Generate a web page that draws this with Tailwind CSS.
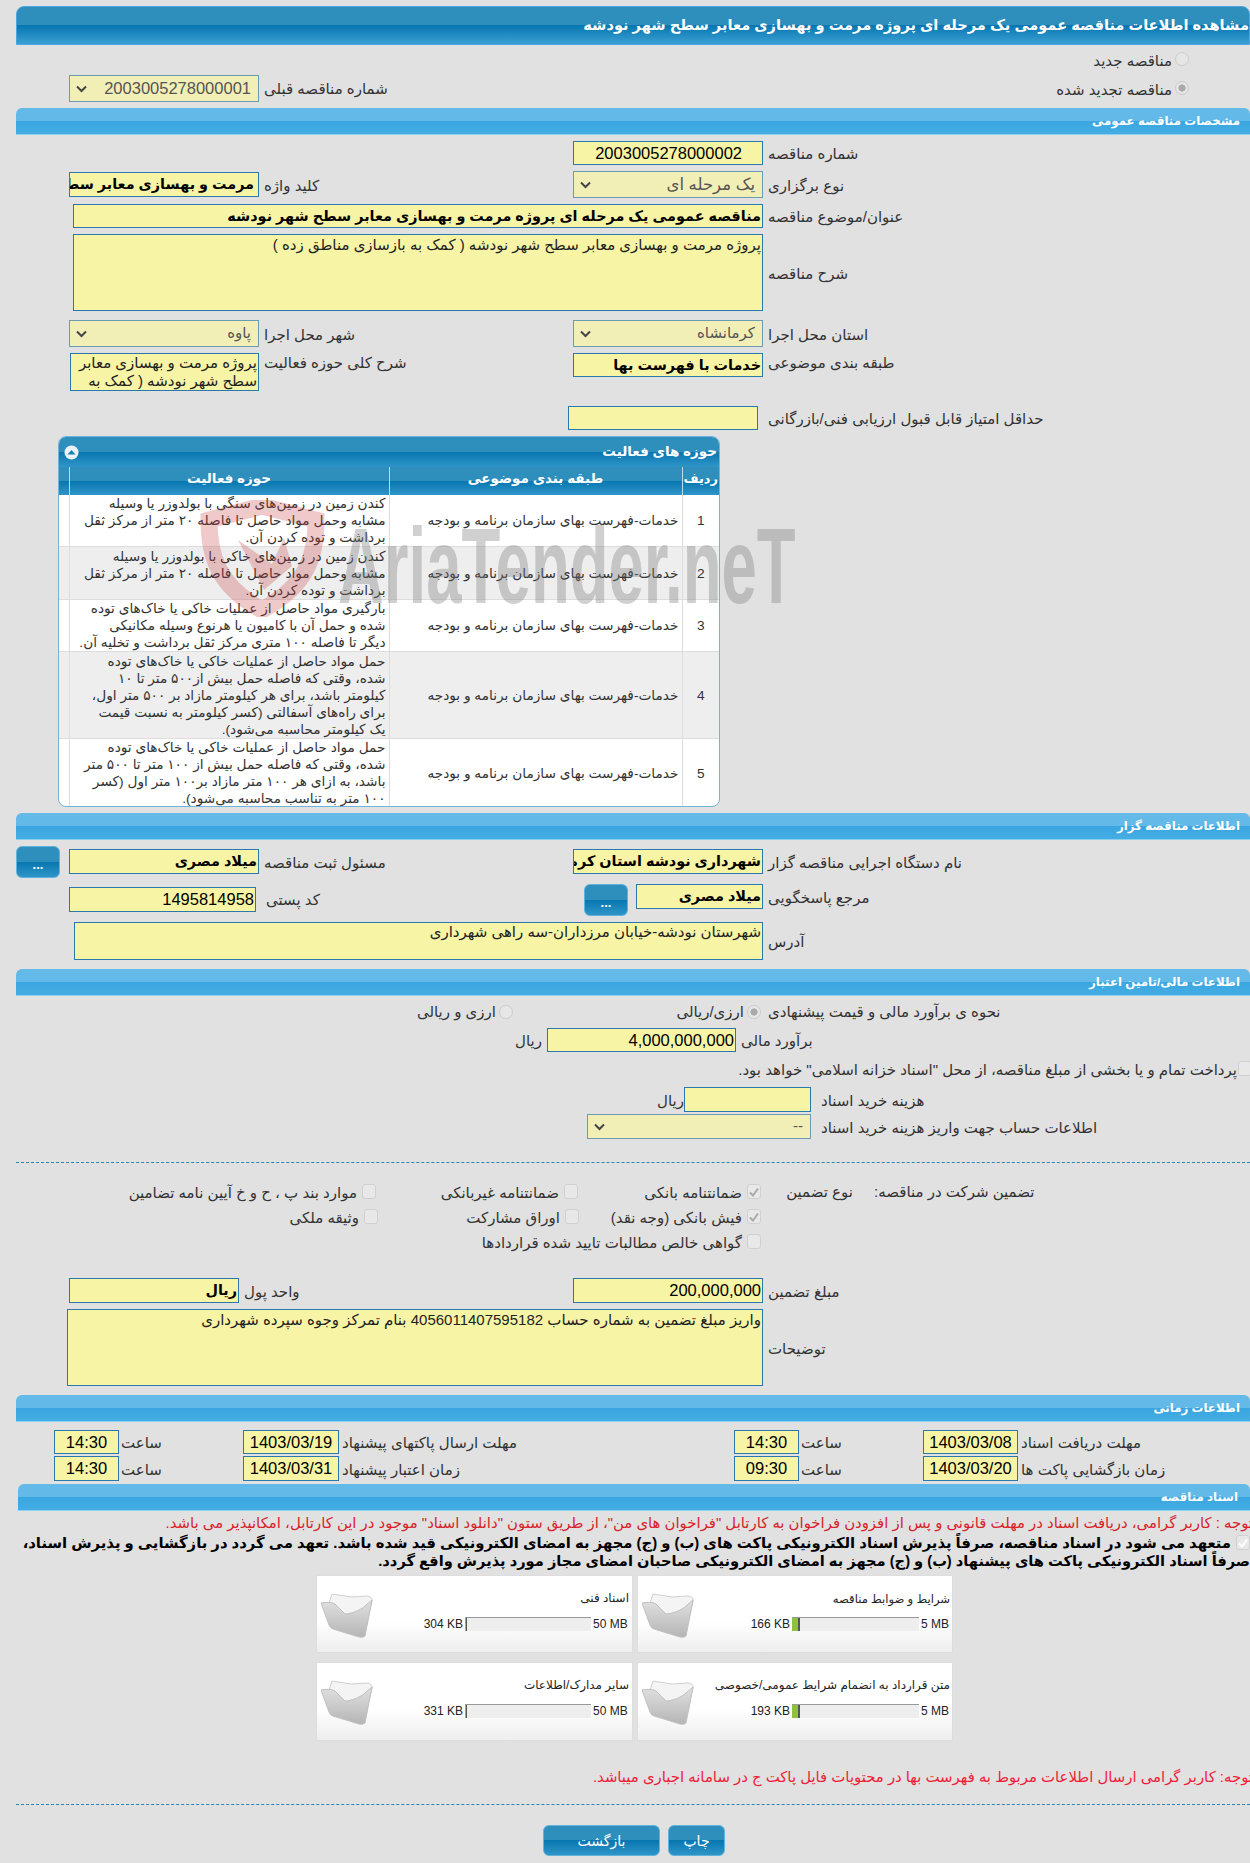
<!DOCTYPE html>
<html lang="fa" dir="rtl">
<head>
<meta charset="UTF-8">
<title>مشاهده اطلاعات مناقصه</title>
<script src="https://cdn.jsdelivr.net/npm/@tailwindcss/browser@4"></script>
</head>
<body class="bg-[#e1e1e1] font-['Liberation_Sans','DejaVu_Sans',sans-serif] text-[15px] text-[#333] overflow-hidden">
<div class="relative w-[1250px] h-[1863px] pl-4 overflow-hidden">

  <!-- title bar -->
  <div class="mt-[6px] pt-[6px] h-[39px] rounded-t-[8px] border border-[#4aa5e0] bg-[linear-gradient(#2e8fbd_50%,#0876b0_50%,#3aa0d3)] text-white font-bold text-[14.6px] leading-[24px] whitespace-nowrap overflow-hidden">مشاهده اطلاعات مناقصه عمومی یک مرحله ای پروژه مرمت و بهسازی معابر سطح شهر نودشه</div>

  <div class="flex items-center gap-[3px] pr-[61px] mt-[7px] h-[14px]"><span class="w-[14px] h-[14px] rounded-full border border-[#ccc] bg-[#e6e6e6]"></span><span class="mt-[4px]">مناقصه جدید</span></div>
  <div class="flex justify-between items-center mt-[9px] h-[27px] pr-[61px] pl-[53px]">
    <div class="flex items-center gap-[3px]"><span class="w-[14px] h-[14px] -mt-[2px] rounded-full border border-[#ccc] bg-[radial-gradient(circle,#aaa_40%,#e6e6e6_45%)]"></span><span class="mt-[3px]">مناقصه تجدید شده</span></div>
    <div class="flex items-center gap-[5px]"><span class="mt-[2px]">شماره مناقصه قبلی</span>
      <div class="w-[190px] h-[27px] flex justify-between items-center border border-[#6a9bb5] bg-[#f2efb6] pr-[7px] pl-[6px] text-[#555] text-[16.5px]"><span>2003005278000001</span><svg class="w-[11px] h-[8px]" viewBox="0 0 11 8"><path d="M1 1.5 5.5 6 10 1.5" fill="none" stroke="#444" stroke-width="2"/></svg></div>
    </div>
  </div>

  <!-- مشخصات -->
  <div class="mt-[6px] h-[27px] pr-[10px] rounded-t-[6px] border-b border-[#8cd0f0] bg-[linear-gradient(#63b9e8_50%,#3aa5e0_50%,#44ade3)] text-white font-bold text-[11.8px] leading-[27px]">مشخصات مناقصه عمومی</div>

  <div class="flex gap-[5px] mt-[6px] h-[24px]">
    <div class="w-[482px] text-left leading-[26px]">شماره مناقصه</div>
    <div class="w-[190px] border border-[#2a79ae] bg-[#f7f5a5] text-black text-[16.5px] leading-[22px] pr-[20px]">2003005278000002</div>
  </div>
  <div class="flex gap-[5px] mt-[6px] h-[27px]">
    <div class="w-[482px] text-left leading-[29px]">نوع برگزاری</div>
    <div class="w-[190px] flex justify-between items-center border border-[#6a9bb5] bg-[#f2efb6] pr-[7px] pl-[6px] text-[#555] text-[16.5px]"><span>یک مرحله ای</span><svg class="w-[11px] h-[8px]" viewBox="0 0 11 8"><path d="M1 1.5 5.5 6 10 1.5" fill="none" stroke="#444" stroke-width="2"/></svg></div>
    <div class="w-[304px] text-left leading-[29px]">کلید واژه</div>
    <div class="w-[190px] h-[25px] mt-[1px] border border-[#2a79ae] bg-[#f7f5a5] text-black font-bold text-[14.4px] leading-[23px] pr-[4px] overflow-hidden whitespace-nowrap">مرمت و بهسازی معابر سطح شهر نودشه</div>
  </div>
  <div class="flex gap-[5px] mt-[6px] h-[24px]">
    <div class="w-[482px] text-left leading-[26px]">عنوان/موضوع مناقصه</div>
    <div class="w-[690px] border border-[#2a79ae] bg-[#f7f5a5] text-black font-bold text-[14.4px] leading-[22px] pr-[1px] overflow-hidden whitespace-nowrap">مناقصه عمومی یک مرحله ای پروژه مرمت و بهسازی معابر سطح شهر نودشه</div>
  </div>
  <div class="flex gap-[5px] mt-[6px] h-[77px]">
    <div class="w-[482px] text-left leading-[79px]">شرح مناقصه</div>
    <div class="w-[690px] border border-[#2a79ae] bg-[#f7f5a5] text-[#222] pr-[1px] pt-[1px] leading-[17px]">پروژه مرمت و بهسازی معابر سطح شهر نودشه ( کمک به بازسازی مناطق زده )</div>
  </div>
  <div class="flex gap-[5px] mt-[9px] h-[27px]">
    <div class="w-[482px] text-left leading-[29px]">استان محل اجرا</div>
    <div class="w-[190px] flex justify-between items-center border border-[#6a9bb5] bg-[#f2efb6] pr-[7px] pl-[6px] text-[#555] text-[15px]"><span>کرمانشاه</span><svg class="w-[11px] h-[8px]" viewBox="0 0 11 8"><path d="M1 1.5 5.5 6 10 1.5" fill="none" stroke="#444" stroke-width="2"/></svg></div>
    <div class="w-[304px] text-left leading-[29px]">شهر محل اجرا</div>
    <div class="w-[190px] flex justify-between items-center border border-[#6a9bb5] bg-[#f2efb6] pr-[7px] pl-[6px] text-[#555] text-[15px]"><span>پاوه</span><svg class="w-[11px] h-[8px]" viewBox="0 0 11 8"><path d="M1 1.5 5.5 6 10 1.5" fill="none" stroke="#444" stroke-width="2"/></svg></div>
  </div>
  <div class="flex gap-[5px] mt-[6px] h-[38px]">
    <div class="w-[482px] text-left leading-[20px]">طبقه بندی موضوعی</div>
    <div class="w-[190px] h-[24px] border border-[#2a79ae] bg-[#f7f5a5] text-black font-bold text-[14.4px] leading-[22px] pr-[1px] overflow-hidden whitespace-nowrap">خدمات با فهرست بها</div>
    <div class="w-[304px] text-left leading-[20px]">شرح کلی حوزه فعالیت</div>
    <div class="w-[189px] border border-[#2a79ae] bg-[#f7f5a5] text-[#222] pr-[1px] leading-[18px] overflow-hidden whitespace-nowrap">پروژه مرمت و بهسازی معابر<br>سطح شهر نودشه ( کمک به</div>
  </div>
  <div class="flex gap-[10px] mt-[15px] h-[24px]">
    <div class="w-[482px] text-left leading-[26px]">حداقل امتیاز قابل قبول ارزیابی فنی/بازرگانی</div>
    <div class="w-[190px] border border-[#2a79ae] bg-[#f7f5a5]"></div>
  </div>

  <!-- حوزه های فعالیت -->
  <div class="mt-[6px] mr-[530px] w-[662px] h-[371px] rounded-[8px] overflow-hidden border border-[#6fb4dc] bg-white">
    <div class="h-[30px] flex justify-between items-center pr-[2px] pl-[5px] bg-[linear-gradient(#2e8fbd_50%,#0876b0_50%,#2f95c8)] text-white font-bold text-[13.5px]">
      <span>حوزه های فعالیت</span>
      <svg class="w-[15px] h-[15px]" viewBox="0 0 15 15"><circle cx="7.5" cy="7.5" r="7" fill="#e8f2f8"/><path d="M3.5 9.5 7.5 5l4 4.500z" fill="#1b7fb4"/></svg>
    </div>
    <table class="w-full table-fixed border-collapse text-[13.7px] text-[#333] leading-[17px]">
      <colgroup><col class="w-[37px]"><col class="w-[293px]"><col class="w-[320px]"><col class="w-[12px]"></colgroup>
      <thead>
        <tr class="h-[28px] bg-[linear-gradient(#2e8fbd_50%,#0876b0_50%,#2f95c8)] text-white font-bold text-[13.5px]">
          <th class="border-l border-[#bcdcee] font-bold text-[13px] pb-[5px]">ردیف</th><th class="border-l border-[#bcdcee] font-bold pb-[5px]">طبقه بندی موضوعی</th><th class="border-l border-[#bcdcee] font-bold pb-[5px]">حوزه فعالیت</th><th></th>
        </tr>
      </thead>
      <tbody>
        <tr class="h-[51px] border-b border-[#ddd]">
          <td class="text-center border-l border-[#ddd]">1</td><td class="pr-[3px] border-l border-[#ddd] whitespace-nowrap">خدمات-فهرست بهای سازمان برنامه و بودجه</td>
          <td class="pr-[3px] border-l border-[#ddd] whitespace-nowrap">کندن زمین در زمین‌های سنگی با بولدوزر یا وسیله<br>مشابه وحمل مواد حاصل  تا فاصله ۲۰ متر از مرکز ثقل<br>برداشت و توده کردن  آن.</td><td></td>
        </tr>
        <tr class="h-[53px] border-b border-[#ddd] bg-[#eee]">
          <td class="text-center border-l border-[#ddd]">2</td><td class="pr-[3px] border-l border-[#ddd] whitespace-nowrap">خدمات-فهرست بهای سازمان برنامه و بودجه</td>
          <td class="pr-[3px] border-l border-[#ddd] whitespace-nowrap">کندن زمین در زمین‌های خاکی با بولدوزر یا وسیله<br>مشابه وحمل مواد حاصل تا فاصله ۲۰ متر از مرکز ثقل<br>برداشت و توده کردن آن.</td><td></td>
        </tr>
        <tr class="h-[51px] border-b border-[#ddd]">
          <td class="text-center border-l border-[#ddd]">3</td><td class="pr-[3px] border-l border-[#ddd] whitespace-nowrap">خدمات-فهرست بهای سازمان برنامه و بودجه</td>
          <td class="pr-[3px] border-l border-[#ddd] whitespace-nowrap">بارگیری مواد حاصل از عملیات خاکی یا خاک‌های توده<br>شده و  حمل آن با کامیون یا هرنوع وسیله مکانیکی<br>دیگر تا فاصله ۱۰۰ متری مرکز ثقل  برداشت و تخلیه آن.</td><td></td>
        </tr>
        <tr class="h-[87px] border-b border-[#ddd] bg-[#eee]">
          <td class="text-center border-l border-[#ddd]">4</td><td class="pr-[3px] border-l border-[#ddd] whitespace-nowrap">خدمات-فهرست بهای سازمان برنامه و بودجه</td>
          <td class="pr-[3px] border-l border-[#ddd] whitespace-nowrap">حمل مواد حاصل از عملیات خاکی یا خاک‌های توده<br>شده، وقتی  که فاصله حمل بیش از۵۰۰ متر تا ۱۰<br>کیلومتر باشد، برای هر کیلومتر مازاد بر ۵۰۰  متر اول،<br>برای راه‌های آسفالتی (کسر کیلومتر به نسبت قیمت<br>یک کیلومتر محاسبه می‌شود).</td><td></td>
        </tr>
        <tr class="h-[69px]">
          <td class="text-center border-l border-[#ddd]">5</td><td class="pr-[3px] border-l border-[#ddd] whitespace-nowrap">خدمات-فهرست بهای سازمان برنامه و بودجه</td>
          <td class="pr-[3px] border-l border-[#ddd] whitespace-nowrap">حمل مواد حاصل از عملیات خاکی یا خاک‌های توده<br>شده، وقتی که فاصله حمل بیش از ۱۰۰ متر تا ۵۰۰ متر<br>باشد، به ازای هر ۱۰۰ متر مازاد بر۱۰۰ متر اول (کسر<br>۱۰۰ متر به تناسب محاسبه می‌شود).</td><td></td>
        </tr>
      </tbody>
    </table>
  </div>

  <!-- watermark -->
  <div class="absolute left-[200px] top-[500px] w-[600px] h-[120px] pointer-events-none" dir="ltr">
    <svg class="absolute left-0 top-0 w-[125px] h-[117px]" viewBox="0 0 125 117"><path d="M9 20 62 6l54 14c0 32-6 64-54 90C18 86 9 56 9 20z" fill="none" stroke="#c83c3c" stroke-opacity=".27" stroke-width="17"/><path d="M38 40 72 64 84 38 92 66 64 90z" fill="#c83c3c" fill-opacity=".27"/></svg>
    <span class="absolute left-[138px] top-[16px] text-[#777]/35 font-bold text-[108px] leading-[100px] whitespace-nowrap origin-left scale-x-[0.588]">AriaTender.neT</span>
  </div>

  <!-- مناقصه گزار -->
  <div class="mt-[6px] h-[27px] pr-[10px] rounded-t-[6px] border-b border-[#8cd0f0] bg-[linear-gradient(#63b9e8_50%,#3aa5e0_50%,#44ade3)] text-white font-bold text-[11.8px] leading-[27px]">اطلاعات مناقصه گزار</div>
  <div class="flex gap-[5px] mt-[9px] h-[25px]">
    <div class="w-[482px] text-left leading-[27px]">نام دستگاه اجرایی مناقصه گزار</div>
    <div class="w-[190px] border border-[#2a79ae] bg-[#f7f5a5] text-black font-bold text-[14.4px] leading-[23px] pr-[1px] overflow-hidden whitespace-nowrap">شهرداری نودشه استان کرمانشاه</div>
    <div class="w-[304px] text-left leading-[27px]">مسئول ثبت مناقصه</div>
    <div class="w-[190px] border border-[#2a79ae] bg-[#f7f5a5] text-black font-bold text-[14.4px] leading-[23px] pr-[1px]">میلاد مصری</div>
    <div class="w-[44px] h-[32px] -mt-[3px] mr-auto rounded-[6px] border border-[#5fb3dc] bg-[linear-gradient(#2e8fbd_50%,#0876b0_50%,#2f95c8)] text-white font-bold text-[13px] text-center leading-[36px]">...</div>
  </div>
  <div class="flex mt-[10px] h-[32px]">
    <div class="w-[482px] text-left leading-[27px]">مرجع پاسخگویی</div>
    <div class="w-[127px] h-[25px] mr-[5px] border border-[#2a79ae] bg-[#f7f5a5] text-black font-bold text-[14.4px] leading-[23px] pr-[1px]">میلاد مصری</div>
    <div class="w-[44px] h-[32px] mr-[8px] rounded-[6px] border border-[#5fb3dc] bg-[linear-gradient(#2e8fbd_50%,#0876b0_50%,#2f95c8)] text-white font-bold text-[13px] text-center leading-[36px]">...</div>
    <div class="w-[328px] pl-[10px] text-left leading-[31px]">کد پستی</div>
    <div class="w-[187px] h-[25px] mt-[3px] border border-[#2a79ae] bg-[#f7f5a5] text-black text-[16.5px] leading-[23px] pr-[1px]">1495814958</div>
  </div>
  <div class="flex gap-[5px] mt-[6px] h-[38px]">
    <div class="w-[482px] text-left leading-[40px]">آدرس</div>
    <div class="w-[689px] border border-[#2a79ae] bg-[#f7f5a5] text-[#222] pr-[1px] leading-[17px]">شهرستان نودشه-خیابان مرزداران-سه راهی شهرداری</div>
  </div>

  <!-- مالی -->
  <div class="mt-[9px] h-[27px] pr-[10px] rounded-t-[6px] border-b border-[#8cd0f0] bg-[linear-gradient(#63b9e8_50%,#3aa5e0_50%,#44ade3)] text-white font-bold text-[11.8px] leading-[27px]">اطلاعات مالی/تامین اعتبار</div>
  <div class="flex items-center mt-[7px] h-[18px]">
    <div class="w-[482px] text-left">نحوه ی برآورد مالی و قیمت پیشنهادی</div>
    <div class="w-[255px] pr-[7px] flex items-center gap-[3px]"><span class="w-[14px] h-[14px] rounded-full border border-[#ccc] bg-[radial-gradient(circle,#aaa_40%,#e6e6e6_45%)]"></span><span>ارزی/ریالی</span></div>
    <div class="flex items-center gap-[3px]"><span class="w-[14px] h-[14px] rounded-full border border-[#ccc] bg-[#e6e6e6]"></span><span>ارزی و ریالی</span></div>
  </div>
  <div class="flex gap-[5px] mt-[7px] h-[24px]">
    <div class="w-[509px] text-left leading-[26px]">برآورد مالی</div>
    <div class="w-[189px] border border-[#2a79ae] bg-[#f7f5a5] text-black text-[16.5px] leading-[22px] pr-[1px]">4,000,000,000</div>
    <div class="leading-[26px]">ریال</div>
  </div>
  <div class="flex items-center gap-[1px] mt-[8px] h-[17px] -mr-[2px]">
    <span class="w-[14px] h-[15px] shrink-0 rounded-[3px] border border-[#d0d0d0] bg-[#e8e8e8]"></span>
    <span class="mt-[4px]">پرداخت تمام و یا بخشی از مبلغ مناقصه، از محل "اسناد خزانه اسلامی" خواهد بود.</span>
  </div>
  <div class="flex mt-[10px] h-[25px]">
    <div class="w-[429px] text-left leading-[27px]">هزینه خرید اسناد</div>
    <div class="w-[127px] mr-[10px] border border-[#2a79ae] bg-[#f7f5a5]"></div>
    <div class="leading-[27px]">ریال</div>
  </div>
  <div class="flex mt-[2px] h-[25px]">
    <div class="w-[429px] text-left leading-[27px]">اطلاعات حساب جهت واریز هزینه خرید اسناد</div>
    <div class="w-[224px] mr-[10px] flex justify-between items-center border border-[#6a9bb5] bg-[#f2efb6] pr-[7px] pl-[6px] text-[#555]"><span>--</span><svg class="w-[11px] h-[8px]" viewBox="0 0 11 8"><path d="M1 1.5 5.5 6 10 1.5" fill="none" stroke="#444" stroke-width="2"/></svg></div>
  </div>
  <div class="mt-[23px] border-t border-dashed border-[#2a87b5]"></div>

  <!-- تضمین -->
  <div class="flex items-center mt-[20px] h-[17px]">
    <div class="w-[376px] text-left mt-[2px]">تضمین شرکت در مناقصه:</div>
    <div class="w-[113px] pr-[21px] mt-[2px] whitespace-nowrap">نوع تضمین</div>
    <div class="w-[183px] flex items-center gap-[5px]"><span class="w-[14px] h-[15px] rounded-[3px] border border-[#d0d0d0] bg-[#e8e8e8] flex items-center justify-center"><svg class="w-[10px] h-[10px]" viewBox="0 0 10 10"><path d="M1 5.500 4 8.500 9 1.500" fill="none" stroke="#aaa" stroke-width="2"/></svg></span><span class="mt-[3px]">ضمانتنامه بانکی</span></div>
    <div class="w-[202px] flex items-center gap-[5px]"><span class="w-[14px] h-[15px] rounded-[3px] border border-[#d0d0d0] bg-[#e8e8e8]"></span><span class="mt-[3px]">ضمانتنامه غیربانکی</span></div>
    <div class="flex items-center gap-[5px]"><span class="w-[14px] h-[15px] rounded-[3px] border border-[#d0d0d0] bg-[#e8e8e8]"></span><span class="mt-[3px]">موارد بند پ ، ح و خ آیین نامه تضامین</span></div>
  </div>
  <div class="flex items-center mt-[8px] h-[17px]">
    <div class="w-[489px]"></div>
    <div class="w-[182px] flex items-center gap-[5px]"><span class="w-[14px] h-[15px] rounded-[3px] border border-[#d0d0d0] bg-[#e8e8e8] flex items-center justify-center"><svg class="w-[10px] h-[10px]" viewBox="0 0 10 10"><path d="M1 5.500 4 8.500 9 1.500" fill="none" stroke="#aaa" stroke-width="2"/></svg></span><span class="mt-[3px]">فیش بانکی (وجه نقد)</span></div>
    <div class="w-[201px] flex items-center gap-[5px]"><span class="w-[14px] h-[15px] rounded-[3px] border border-[#d0d0d0] bg-[#e8e8e8]"></span><span class="mt-[3px]">اوراق مشارکت</span></div>
    <div class="flex items-center gap-[5px]"><span class="w-[14px] h-[15px] rounded-[3px] border border-[#d0d0d0] bg-[#e8e8e8]"></span><span class="mt-[3px]">وثیقه ملکی</span></div>
  </div>
  <div class="flex items-center mt-[8px] h-[17px]">
    <div class="w-[489px]"></div>
    <div class="flex items-center gap-[5px]"><span class="w-[14px] h-[15px] rounded-[3px] border border-[#d0d0d0] bg-[#e8e8e8]"></span><span class="mt-[3px]">گواهی خالص مطالبات تایید شده قراردادها</span></div>
  </div>

  <div class="flex gap-[5px] mt-[28px] h-[25px]">
    <div class="w-[482px] text-left leading-[27px]">مبلغ تضمین</div>
    <div class="w-[190px] border border-[#2a79ae] bg-[#f7f5a5] text-black text-[16.5px] leading-[23px] pr-[1px]">200,000,000</div>
    <div class="w-[324px] text-left leading-[27px]">واحد پول</div>
    <div class="w-[170px] border border-[#2a79ae] bg-[#f7f5a5] text-black font-bold text-[14.4px] leading-[23px] pr-[1px]">ریال</div>
  </div>
  <div class="flex gap-[5px] mt-[6px] h-[77px]">
    <div class="w-[482px] text-left leading-[79px]">توضیحات</div>
    <div class="w-[696px] border border-[#2a79ae] bg-[#f7f5a5] text-[#222] pr-[1px] pt-[1px] leading-[17px]">واریز مبلغ تضمین به شماره حساب 405601140759‌5182 بنام تمرکز وجوه سپرده شهرداری</div>
  </div>

  <!-- زمانی -->
  <div class="mt-[9px] h-[27px] pr-[10px] rounded-t-[6px] border-b border-[#8cd0f0] bg-[linear-gradient(#63b9e8_50%,#3aa5e0_50%,#44ade3)] text-white font-bold text-[11.8px] leading-[27px]">اطلاعات زمانی</div>
  <div class="flex mt-[8px] h-[24px] text-[16.5px]">
    <div class="w-[229px] text-left leading-[26px] text-[15px]">مهلت دریافت اسناد</div>
    <div class="w-[95px] mr-[3px] border border-[#2a79ae] bg-[#f7f5a5] text-black text-center leading-[22px]">1403/03/08</div>
    <div class="w-[122px] text-left leading-[26px] text-[15px]">ساعت</div>
    <div class="w-[65px] mr-[2px] border border-[#2a79ae] bg-[#f7f5a5] text-black text-center leading-[22px]">14:30</div>
    <div class="w-[392px] text-left leading-[26px] text-[15px]">مهلت ارسال پاکتهای پیشنهاد</div>
    <div class="w-[96px] mr-[3px] border border-[#2a79ae] bg-[#f7f5a5] text-black text-center leading-[22px]">1403/03/19</div>
    <div class="w-[122px] text-left leading-[26px] text-[15px]">ساعت</div>
    <div class="w-[65px] mr-[2px] border border-[#2a79ae] bg-[#f7f5a5] text-black text-center leading-[22px]">14:30</div>
  </div>
  <div class="flex mt-[2px] h-[25px] text-[16.5px]">
    <div class="w-[229px] text-left leading-[27px] text-[15px]">زمان بازگشایی پاکت ها</div>
    <div class="w-[95px] mr-[3px] border border-[#2a79ae] bg-[#f7f5a5] text-black text-center leading-[23px]">1403/03/20</div>
    <div class="w-[122px] text-left leading-[27px] text-[15px]">ساعت</div>
    <div class="w-[65px] mr-[2px] border border-[#2a79ae] bg-[#f7f5a5] text-black text-center leading-[23px]">09:30</div>
    <div class="w-[392px] text-left leading-[27px] text-[15px]">زمان اعتبار پیشنهاد</div>
    <div class="w-[96px] mr-[3px] border border-[#2a79ae] bg-[#f7f5a5] text-black text-center leading-[23px]">1403/03/31</div>
    <div class="w-[122px] text-left leading-[27px] text-[15px]">ساعت</div>
    <div class="w-[65px] mr-[2px] border border-[#2a79ae] bg-[#f7f5a5] text-black text-center leading-[23px]">14:30</div>
  </div>

  <!-- اسناد -->
  <div class="mt-[3px] ml-[2px] h-[27px] pr-[12px] rounded-t-[6px] border-b border-[#8cd0f0] bg-[linear-gradient(#63b9e8_50%,#3aa5e0_50%,#44ade3)] text-white font-bold text-[11.8px] leading-[27px]">اسناد مناقصه</div>
  <div class="mt-[4px] -mr-[3px] h-[17px] leading-[17px] text-[14.88px] text-[#d8232a] whitespace-nowrap">توجه : کاربر گرامی، دریافت اسناد در مهلت قانونی و پس از افزودن فراخوان به کارتابل "فراخوان های من"، از طریق ستون "دانلود اسناد" موجود در این کارتابل، امکانپذیر می باشد.</div>
  <div class="flex items-start gap-[5px] h-[17px] mt-[3px] whitespace-nowrap">
    <span class="w-[14px] h-[15px] shrink-0 rounded-[3px] border border-[#d0d0d0] bg-[#e8e8e8] flex items-center justify-center"><svg class="w-[10px] h-[10px]" viewBox="0 0 10 10"><path d="M1 5.500 4 8.500 9 1.500" fill="none" stroke="#fff" stroke-width="2"/></svg></span>
    <span class="font-bold text-black text-[14.8px] leading-[17px]">متعهد می شود در اسناد مناقصه، صرفاً پذیرش اسناد الکترونیکی پاکت های (ب) و (ج) مجهز به امضای الکترونیکی قید شده باشد. تعهد می گردد در بازگشایی و پذیرش اسناد،</span>
  </div>
  <div class="h-[17px] mt-[1px] font-bold text-black text-[14.65px] leading-[17px] whitespace-nowrap">صرفاً اسناد الکترونیکی پاکت های پیشنهاد (ب) و (ج) مجهز به امضای الکترونیکی صاحبان امضای مجاز مورد پذیرش واقع گردد.</div>

  <!-- files -->
  <div class="flex gap-[4px] mt-[5px] pr-[297px] text-[12px]">
    <div class="w-[316px] h-[78px] relative border border-[#ddd] bg-[linear-gradient(#fff_60%,#eee)]">
      <div class="pt-[14px] pr-[2px] leading-[17px] text-[#222] text-[11.6px]">شرایط و ضوابط مناقصه</div>
      <div class="flex items-center mt-[8px] pr-[3px] text-[#222] whitespace-nowrap"><span class="w-[28px]" dir="ltr">5 MB</span><span class="w-[127px] h-[14px] mr-[2px] flex bg-[#eee] border-t border-[#999]" dir="ltr"><span class="w-[6px] bg-[#8fc13a]"></span><span class="w-[2px] bg-[#555]"></span></span><span class="mr-[2px]" dir="ltr">166 KB</span></div>
      <svg class="absolute left-[4px] top-[17px] w-[52px] h-[46px]" viewBox="0 0 52 46"><defs><linearGradient id="f1" x1="0" y1="0" x2="0" y2="1"><stop offset="0" stop-color="#e0e0e0"/><stop offset="1" stop-color="#b5b5b5"/></linearGradient></defs><path d="M8 10 11 1l19 3 16-1q6 1 5 5L46 30 20 30z" fill="#f4f4f4" stroke="#d0d0d0"/><path d="M0 10C5 9 11 9 14 11L24 21C30 21 40 17 44 13L51 7 44 43Q42 45 38 44L12 36Q9 35 8 32z" fill="url(#f1)" stroke="#c0c0c0"/></svg>
    </div>
    <div class="w-[317px] h-[78px] relative border border-[#ddd] bg-[linear-gradient(#fff_60%,#eee)]">
      <div class="pt-[14px] pr-[3px] leading-[17px] text-[#222]">اسناد فنی</div>
      <div class="flex items-center mt-[8px] pr-[4px] text-[#222] whitespace-nowrap"><span class="w-[35px]" dir="ltr">50 MB</span><span class="w-[126px] h-[14px] mr-[2px] flex bg-[#eee] border-t border-[#999]" dir="ltr"><span class="w-[1px] bg-[#8fc13a]"></span><span class="w-[1px] bg-[#555]"></span></span><span class="mr-[2px]" dir="ltr">304 KB</span></div>
      <svg class="absolute left-[4px] top-[17px] w-[52px] h-[46px]" viewBox="0 0 52 46"><path d="M8 10 11 1l19 3 16-1q6 1 5 5L46 30 20 30z" fill="#f4f4f4" stroke="#d0d0d0"/><path d="M0 10C5 9 11 9 14 11L24 21C30 21 40 17 44 13L51 7 44 43Q42 45 38 44L12 36Q9 35 8 32z" fill="url(#f1)" stroke="#c0c0c0"/></svg>
    </div>
  </div>
  <div class="flex gap-[4px] mt-[9px] pr-[297px] text-[12px]">
    <div class="w-[316px] h-[79px] relative border border-[#ddd] bg-[linear-gradient(#fff_60%,#eee)]">
      <div class="pt-[14px] pr-[2px] leading-[17px] text-[#222]">متن قرارداد به انضمام شرایط عمومی/خصوصی</div>
      <div class="flex items-center mt-[8px] pr-[3px] text-[#222] whitespace-nowrap"><span class="w-[28px]" dir="ltr">5 MB</span><span class="w-[127px] h-[14px] mr-[2px] flex bg-[#eee] border-t border-[#999]" dir="ltr"><span class="w-[6px] bg-[#8fc13a]"></span><span class="w-[2px] bg-[#555]"></span></span><span class="mr-[2px]" dir="ltr">193 KB</span></div>
      <svg class="absolute left-[4px] top-[17px] w-[52px] h-[46px]" viewBox="0 0 52 46"><path d="M8 10 11 1l19 3 16-1q6 1 5 5L46 30 20 30z" fill="#f4f4f4" stroke="#d0d0d0"/><path d="M0 10C5 9 11 9 14 11L24 21C30 21 40 17 44 13L51 7 44 43Q42 45 38 44L12 36Q9 35 8 32z" fill="url(#f1)" stroke="#c0c0c0"/></svg>
    </div>
    <div class="w-[317px] h-[79px] relative border border-[#ddd] bg-[linear-gradient(#fff_60%,#eee)]">
      <div class="pt-[14px] pr-[3px] leading-[17px] text-[#222]">سایر مدارک/اطلاعات</div>
      <div class="flex items-center mt-[8px] pr-[4px] text-[#222] whitespace-nowrap"><span class="w-[35px]" dir="ltr">50 MB</span><span class="w-[126px] h-[14px] mr-[2px] flex bg-[#eee] border-t border-[#999]" dir="ltr"><span class="w-[1px] bg-[#8fc13a]"></span><span class="w-[1px] bg-[#555]"></span></span><span class="mr-[2px]" dir="ltr">331 KB</span></div>
      <svg class="absolute left-[4px] top-[17px] w-[52px] h-[46px]" viewBox="0 0 52 46"><path d="M8 10 11 1l19 3 16-1q6 1 5 5L46 30 20 30z" fill="#f4f4f4" stroke="#d0d0d0"/><path d="M0 10C5 9 11 9 14 11L24 21C30 21 40 17 44 13L51 7 44 43Q42 45 38 44L12 36Q9 35 8 32z" fill="url(#f1)" stroke="#c0c0c0"/></svg>
    </div>
  </div>

  <div class="mt-[28px] -mr-[3px] h-[17px] leading-[17px] text-[14.88px] text-[#f01c38] whitespace-nowrap">توجه: کاربر گرامی ارسال اطلاعات مربوط به فهرست بها در محتویات فایل پاکت ج در سامانه اجباری میباشد.</div>
  <div class="mt-[18px] border-t border-dashed border-[#2a87b5]"></div>

  <div class="flex gap-[8px] mt-[20px] pr-[525px]">
    <div class="w-[57px] h-[31px] rounded-[6px] border border-[#5fb3dc] bg-[linear-gradient(#2e8fbd_50%,#0876b0_50%,#2f95c8)] text-white text-[14px] text-center leading-[31px]">چاپ</div>
    <div class="w-[117px] h-[31px] rounded-[6px] border border-[#5fb3dc] bg-[linear-gradient(#2e8fbd_50%,#0876b0_50%,#2f95c8)] text-white text-[14px] text-center leading-[31px]">بازگشت</div>
  </div>
</div>
</body>
</html>
